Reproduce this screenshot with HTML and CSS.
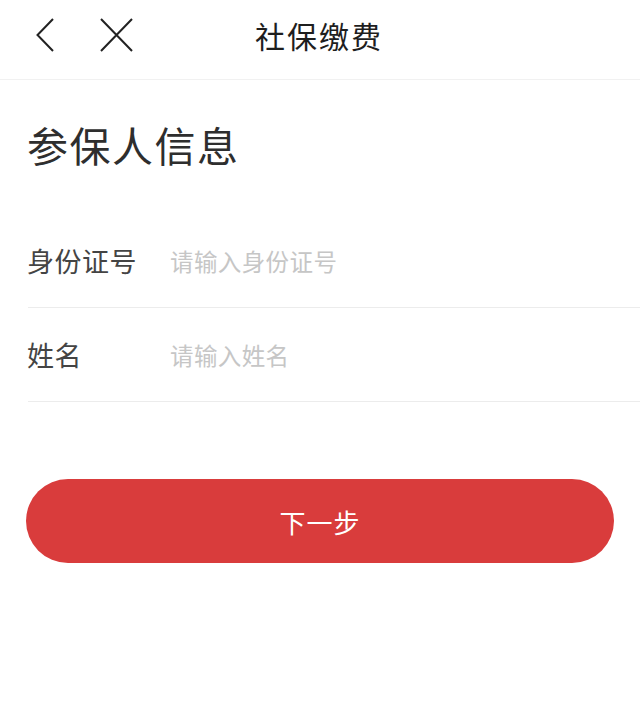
FILE: index.html
```html
<!DOCTYPE html>
<html lang="zh-CN">
<head>
<meta charset="utf-8">
<title>社保缴费</title>
<link rel="stylesheet" href="styles.css">
</head>
<body>
<header class="nav">
  <div class="nav-left">
    <svg class="icon-back" width="18" height="34" viewBox="0 0 18 34" aria-hidden="true">
      <path d="M17 1 L1.5 17 L17 33" fill="none" stroke="#222" stroke-width="2"/>
    </svg>
    <svg class="icon-close" width="33" height="34" viewBox="0 0 33 34" aria-hidden="true">
      <path d="M1 1 L32 33 M32 1 L1 33" fill="none" stroke="#222" stroke-width="2"/>
    </svg>
  </div>
  <h1 class="nav-title">社保缴费</h1>
  <div class="nav-right"></div>
</header>
<main class="content">
  <h2 class="section-title">参保人信息</h2>
  <div class="form">
    <label class="row">
      <span class="row-label">身份证号</span>
      <input class="row-input" type="text" placeholder="请输入身份证号">
    </label>
    <label class="row">
      <span class="row-label">姓名</span>
      <input class="row-input" type="text" placeholder="请输入姓名">
    </label>
  </div>
  <button class="btn-next" type="button">下一步</button>
</main>
</body>
</html>
```
FILE: styles.css
```css
html, body {
  margin: 0;
  padding: 0;
  background: #ffffff;
}
body {
  width: 640px;
  font-family: "Noto Sans CJK SC", "Noto Sans", sans-serif;
  color: #333;
}
.nav {
  height: 80px;
  box-sizing: border-box;
  padding-bottom: 10px;
  border-bottom: 1px solid #f1f1f1;
  display: grid;
  grid-template-columns: 1fr auto 1fr;
  align-items: center;
}
.nav-left {
  display: flex;
  align-items: center;
  padding-left: 36px;
  gap: 46px;
}
.icon-back, .icon-close {
  display: block;
}
.nav-title {
  margin: 0 0 0 -2px;
  font-size: 30px;
  line-height: 30px;
  font-weight: 400;
  letter-spacing: 2px;
  color: #1e1e1e;
}
.content {
  display: flex;
  flex-direction: column;
}
.section-title {
  margin: 44px 0 50px 27px;
  font-size: 41px;
  line-height: 40px;
  font-weight: 400;
  color: #2e2e2e;
  letter-spacing: 1.5px;
}
.form {
  display: flex;
  flex-direction: column;
  margin-left: 28px;
}
.row {
  height: 94px;
  box-sizing: border-box;
  border-bottom: 1px solid #ececec;
  display: flex;
  align-items: center;
}
.row-label {
  width: 143px;
  flex: none;
  margin-left: -1px;
  font-size: 27px;
  letter-spacing: 0.5px;
  color: #444;
}
.row-input {
  flex: 1;
  min-width: 0;
  border: none;
  outline: none;
  padding: 0;
  background: transparent;
  font-family: "Noto Sans CJK SC", "Noto Sans", sans-serif;
  font-size: 23.5px;
  letter-spacing: 0.4px;
  color: #333;
}
.row-input::placeholder {
  color: #c6c6c6;
}
.btn-next {
  margin: 77px 26px 0 26px;
  height: 84px;
  border: none;
  border-radius: 42px;
  background: #d93c3c;
  color: #ffffff;
  font-family: "Noto Sans CJK SC", "Noto Sans", sans-serif;
  font-size: 26px;
  letter-spacing: 1px;
  padding: 0;
}
```
